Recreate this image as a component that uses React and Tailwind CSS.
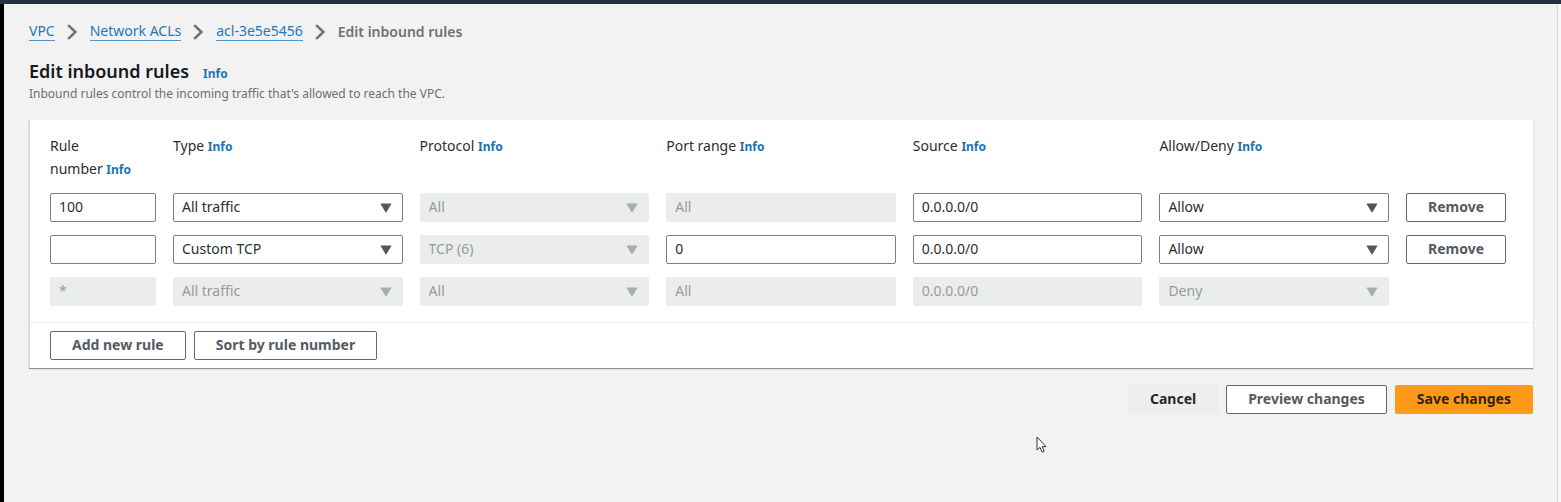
import React from "react";

const COLUMNS = [
  { id: "number", label: "Rule number" },
  { id: "type", label: "Type" },
  { id: "protocol", label: "Protocol" },
  { id: "port", label: "Port range" },
  { id: "source", label: "Source" },
  { id: "action", label: "Allow/Deny" },
];

const RULES = [
  {
    number: { value: "100" },
    type: { value: "All traffic", options: ["All traffic", "Custom TCP"] },
    protocol: { value: "All", options: ["All"], disabled: true },
    port: { value: "All", disabled: true },
    source: { value: "0.0.0.0/0" },
    action: { value: "Allow", options: ["Allow", "Deny"] },
    removable: true,
  },
  {
    number: { value: "" },
    type: { value: "Custom TCP", options: ["All traffic", "Custom TCP"] },
    protocol: { value: "TCP (6)", options: ["TCP (6)"], disabled: true },
    port: { value: "0" },
    source: { value: "0.0.0.0/0" },
    action: { value: "Allow", options: ["Allow", "Deny"] },
    removable: true,
  },
  {
    number: { value: "*", disabled: true },
    type: { value: "All traffic", options: ["All traffic"], disabled: true },
    protocol: { value: "All", options: ["All"], disabled: true },
    port: { value: "All", disabled: true },
    source: { value: "0.0.0.0/0", disabled: true },
    action: { value: "Deny", options: ["Deny"], disabled: true },
    removable: false,
  },
];

const GRID = "grid grid-cols-[106px_repeat(5,minmax(0,1fr))_107px] gap-x-[17px]";
const FIELD =
  "block h-[29px] w-full min-w-0 rounded-[2px] border border-[#7d8082] bg-white px-2 pb-[2px] text-sm leading-5 text-[#2a2e33] disabled:border-[#ebecec] disabled:bg-[#ebecec] disabled:text-[#969b9b] disabled:opacity-100";

const BUTTON_VARIANTS = {
  normal: "border-[#65696e] bg-white text-[#545b64]",
  link: "border-[#eeeeee] bg-[#eeeeee] text-[#24282e]",
  primary: "border-[#ff9a19] bg-[#ff9a19] text-[#33240f]",
};

function Info() {
  return (
    <a href="#info" className="text-xs font-bold text-[#1a72b8]">
      Info
    </a>
  );
}

function Field({ cell, column }) {
  if (!cell.options) {
    return (
      <input
        type="text"
        aria-labelledby={`col-${column}`}
        defaultValue={cell.value}
        disabled={cell.disabled}
        className={FIELD}
      />
    );
  }
  return (
    <div className="relative">
      <select
        aria-labelledby={`col-${column}`}
        defaultValue={cell.value}
        disabled={cell.disabled}
        className={`${FIELD} peer appearance-none pr-8`}
      >
        {cell.options.map((o) => (
          <option key={o}>{o}</option>
        ))}
      </select>
      <svg
        viewBox="0 0 12 10"
        className="pointer-events-none absolute top-[10px] right-[11px] h-[10px] w-3 fill-[#545658] peer-disabled:fill-[#a9adad]"
        aria-hidden="true"
      >
        <path d="M1.2 0.4H10.8Q11.7 0.4 11.2 1.3L6.6 9Q6 9.8 5.4 9L0.8 1.3Q0.3 0.4 1.2 0.4Z" />
      </svg>
    </div>
  );
}

function Button({ variant = "normal", className = "", children }) {
  return (
    <button
      type="button"
      className={`h-[29px] rounded-[2px] border px-[21px] pb-[2px] text-sm leading-5 font-bold whitespace-nowrap ${BUTTON_VARIANTS[variant]} ${className}`}
    >
      {children}
    </button>
  );
}

function Chevron() {
  return (
    <svg viewBox="0 0 10 16" className="h-4 w-[10px]" aria-hidden="true">
      <path d="M1.2 1.2L8.4 8L1.2 14.8" fill="none" stroke="#6f7173" strokeWidth="2.5" />
    </svg>
  );
}

function Breadcrumbs() {
  return (
    <nav aria-label="Breadcrumbs">
      <ol className="flex items-center text-sm leading-[18px]">
        {["VPC", "Network ACLs", "acl-3e5e5456"].map((item) => (
          <li key={item} className="flex items-center">
            <a href="#crumb" className="border-b border-[#4a98d3] text-[#2577b8]">
              {item}
            </a>
            <span className="mr-[13px] ml-3">
              <Chevron />
            </span>
          </li>
        ))}
        <li className="font-semibold text-[#6f7173]" aria-current="page">
          Edit inbound rules
        </li>
      </ol>
    </nav>
  );
}

function Cursor() {
  return (
    <svg
      viewBox="0 0 11 18"
      className="pointer-events-none absolute top-[436px] left-[1036px] h-[18px] w-[11px]"
      aria-hidden="true"
    >
      <path
        d="M1 1V14L4 11.3L6 16.2L8.2 15.2L6.2 10.6H10Z"
        fill="#fff"
        stroke="#333"
        strokeWidth="1"
      />
    </svg>
  );
}

export default function App() {
  return (
    <div className="relative flex min-h-screen flex-col bg-[#f2f2f2] font-['Noto_Sans','Open_Sans',sans-serif]">
      <div className="h-1 bg-[#262e42]" />
      <div className="flex grow">
        <div className="w-1 shrink-0 bg-black" />
        <main className="min-w-0 grow border-r border-[#d9dadb] pt-[18px] pr-6 pl-[25px]">
          <Breadcrumbs />
          <header className="mt-[17px]">
            <div className="flex items-baseline gap-[14px] leading-[26px]">
              <h1 className="text-lg leading-[26px] font-semibold text-[#16191f]">
                Edit inbound rules
              </h1>
              <Info />
            </div>
            <p className="text-xs leading-5 text-[#6a6f75]">
              Inbound rules control the incoming traffic that's allowed to reach the VPC.
            </p>
          </header>

          <section className="mt-4 border-l border-[#d5d6d6] bg-white shadow-[0_1px_1px_0_rgba(0,0,0,0.4)]">
            <div className="pt-[14px] pr-5 pb-4 pl-5">
              <div className={`${GRID} mb-[13px] text-sm leading-[23px] text-[#2a2e33]`}>
                {COLUMNS.map((c) => (
                  <div key={c.id}>
                    <span id={`col-${c.id}`}>{c.label}</span>
                    {"\u00a0"}
                    <Info />
                  </div>
                ))}
              </div>
              <div className="flex flex-col gap-[13px]">
                {RULES.map((rule, i) => (
                  <div key={i} className={GRID}>
                    {COLUMNS.map((c) => (
                      <Field key={c.id} column={c.id} cell={rule[c.id]} />
                    ))}
                    {rule.removable && <Button className="justify-self-start">Remove</Button>}
                  </div>
                ))}
              </div>
            </div>
            <div className="flex gap-2 border-t border-[#f0f1f1] px-5 py-2">
              <Button>Add new rule</Button>
              <Button>Sort by rule number</Button>
            </div>
          </section>

          <div className="mt-[17px] flex justify-end gap-2">
            <Button variant="link">Cancel</Button>
            <Button>Preview changes</Button>
            <Button variant="primary">Save changes</Button>
          </div>
        </main>
        <div className="w-[3px] shrink-0 bg-[#f6f7f8]" />
      </div>
      <Cursor />
    </div>
  );
}
